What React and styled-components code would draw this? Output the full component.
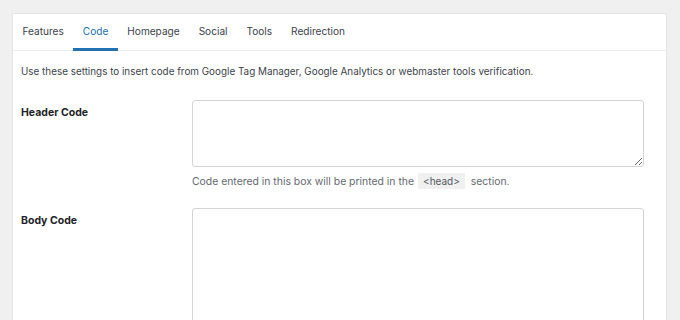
import styled, { createGlobalStyle } from "styled-components";

const GlobalStyle = createGlobalStyle`
  html, body {
    margin: 0;
    padding: 0;
    background: #f0f0f1;
  }
  body {
    font-family: Inter, "Noto Sans", sans-serif;
    font-size: 10.5px;
    color: #3c434a;
    overflow: hidden;
  }
`;

const Page = styled.div`
  padding: 13px 13px 0 12px;
`;

const Card = styled.div`
  background: #fff;
  border: 1px solid #e4e4e6;
  border-bottom: none;
  height: 320px;
`;

const TabBar = styled.nav`
  display: flex;
  height: 36px;
  border-bottom: 1px solid #ececee;
`;

const Tab = styled.div`
  display: flex;
  align-items: center;
  padding: 0 9.5px;
  margin-bottom: -1px;
  font-size: 10.1px;
  color: ${(p) => (p.$active ? "#2271b1" : "#3c434a")};
  border-bottom: 3px solid ${(p) => (p.$active ? "#2271b1" : "transparent")};
`;

const Intro = styled.p`
  margin: 0;
  padding: 12px 8px 0;
  font-size: 9.9px;
  line-height: 16px;
`;

const Form = styled.div`
  display: grid;
  grid-template-columns: 171px 452px;
  padding: 21px 8px 0;
  row-gap: 18px;
`;

const Label = styled.div`
  font-weight: 700;
  color: #1d2327;
  line-height: 16px;
  padding-top: 5px;
`;

const Field = styled.div`
  display: flex;
  flex-direction: column;
`;

const Area = styled.textarea`
  box-sizing: border-box;
  width: 100%;
  height: ${(p) => p.$height}px;
  border: 1px solid #d4d4d6;
  border-radius: 3px;
  background: #fff;
  margin: 0;
  resize: vertical;
  font-family: inherit;
`;

const Help = styled.p`
  margin: 6px 0 0;
  font-size: 10.4px;
  line-height: 17px;
  color: #646970;
`;

const Code = styled.code`
  font-family: inherit;
  font-size: 10px;
  background: #f0f0f1;
  padding: 2px 5px;
  margin: 0 3px 0 4px;
  color: #50575e;
`;

const tabs = ["Features", "Code", "Homepage", "Social", "Tools", "Redirection"];

export default function App() {
  return (
    <Page>
      <GlobalStyle />
      <Card>
        <TabBar>
          {tabs.map((t) => (
            <Tab key={t} $active={t === "Code"}>
              {t}
            </Tab>
          ))}
        </TabBar>
        <Intro>
          Use these settings to insert code from Google Tag Manager, Google
          Analytics or webmaster tools verification.
        </Intro>
        <Form>
          <Label>Header Code</Label>
          <Field>
            <Area $height={67} />
            <Help>
              Code entered in this box will be printed in the
              <Code>&lt;head&gt;</Code> section.
            </Help>
          </Field>
          <Label>Body Code</Label>
          <Field>
            <Area $height={160} />
          </Field>
        </Form>
      </Card>
    </Page>
  );
}
